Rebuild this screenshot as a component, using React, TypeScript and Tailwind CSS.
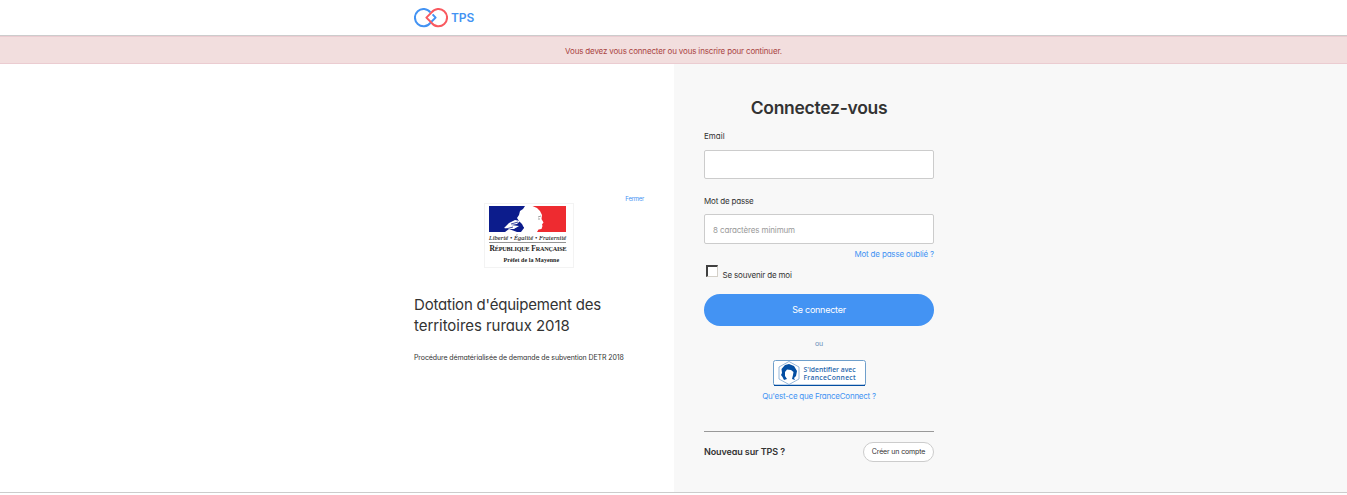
import React from 'react';

function Logo() {
  return (
    <svg width="34" height="20" viewBox="0 0 34 20" fill="none" strokeWidth="2" strokeLinejoin="round">
      <path d="M16.4 4.4A8.6 8.6 0 1 0 16.4 14.8L21.6 9.6L18.6 6.4" stroke="#4393f3" />
      <path d="M17.6 4.4A8.6 8.6 0 1 1 17.6 14.8L12.4 9.6Z" stroke="#f9595f" />
    </svg>
  );
}

function Emblem() {
  return (
    <svg width="90" height="65" viewBox="0 0 90 65" className="block">
      <rect x="0.5" y="0.5" width="89" height="64" fill="#fff" stroke="#f3f3f3" />
      <path d="M5 3H41L39 6L36 8L35 12L33 15L35 18L38 21L40 25L37 29H5Z" fill="#0c1c8c" />
      <path d="M48.5 3H82V29H53L54.5 26.5L57.5 26L58.5 23L58 21.5L59.5 19.5L57.5 16L58 12L56 8L53 5Z" fill="#ee2b30" />
      <path d="M20 25L25 20L31 17L36 18L33 21L27 22L35 23L30 26L25 26L33 29H21L25 26Z" fill="#fff" />
      <path d="M22 26L29 24M27 21L34 19M31 26L38 25M36 22L40 25" stroke="#0c1c8c" strokeWidth="0.8" />
      <path d="M54 14L57 13M54 16H56" stroke="#777" strokeWidth="0.7" />
      <g fontFamily="'Liberation Serif', serif" fill="#222">
        <text x="5" y="37.2" fontSize="6.4" fontStyle="italic" textLength="77" stroke="#222" strokeWidth="0.1">Liberté • Égalité • Fraternité</text>
        <path d="M5 39.5H82" stroke="#666" strokeWidth="0.7" />
        <text x="5.5" y="47.5" fontSize="7.2" fontWeight="bold" textLength="77" lengthAdjust="spacingAndGlyphs">R<tspan fontSize="5.9">ÉPUBLIQUE</tspan> F<tspan fontSize="5.9">RANÇAISE</tspan></text>
        <text x="19.5" y="59" fontSize="6" fontWeight="bold" textLength="55.5">Préfet de la Mayenne</text>
      </g>
    </svg>
  );
}

function FranceConnect() {
  return (
    <button type="button" className="block h-[26px] w-[93px]" aria-label="FranceConnect">
      <svg width="93" height="26" viewBox="0 0 93 26">
        <rect x="0.5" y="0.5" width="92" height="25" rx="2" fill="#fff" stroke="#6f9fcb" />
        <path d="M1 25.3H92" stroke="#034ea2" strokeWidth="1.2" />
        <path d="M16 1.5L26 7V19L16 24.5L6 19V7Z" fill="none" stroke="#7ba5d0" strokeWidth="0.8" />
        <path d="M11 20L9.5 17L8 15L9 13L8.5 9L12 5L16 4L21 6L24 11L23 16L21 18L22 20L19 19L20 15L20.5 12L18 10L14 9.5L12 12L12 16L14 19Z" fill="#034ea2" />
        <g fontFamily="'Open Sans', sans-serif" fontSize="6.8" fontWeight="600" fill="#2b68ad">
          <text x="30.5" y="12" textLength="52">S'identifier avec</text>
          <text x="30.5" y="19.7" textLength="52">FranceConnect</text>
        </g>
      </svg>
    </button>
  );
}

export default function App() {
  return (
    <div className="flex h-[495px] w-full flex-col overflow-hidden whitespace-nowrap bg-white font-['Inter',sans-serif] text-[8px] tracking-[-0.17px] text-[#333] [font-feature-settings:'cv11']">
      <header className="flex h-9 shrink-0 justify-center border-b border-[#ccc]">
        <div className="flex w-[519px] items-center gap-[3px]">
          <Logo />
          <span className="text-[12px] font-semibold leading-4 tracking-[-0.1px] text-[#4393f3]">TPS</span>
        </div>
      </header>
      <div className="flex h-7 shrink-0 items-center justify-center border-y border-[#ebccd1] bg-[#f2dede] pt-[2px] text-[#a94442]">
        Vous devez vous connecter ou vous inscrire pour continuer.
      </div>
      <main className="grid h-[429px] shrink-0 grid-cols-2 border-b border-[#ccc]">
        <section className="flex justify-end">
          <div className="flex w-[259.5px] flex-col pr-[29.5px] pt-[131px]">
            <a className="h-2 self-end text-[6px] leading-2 tracking-[-0.25px] text-[#4393f3]">Fermer</a>
            <div className="h-[65px] self-center">
              <Emblem />
            </div>
            <h1 className="mt-[26px] text-[15px] leading-[21px] tracking-[-0.2px]">
              Dotation d'équipement des<br />
              <span className="tracking-[-0.05px]">territoires ruraux 2018</span>
            </h1>
            <p className="mt-4 text-[7px] leading-3 tracking-[-0.1px]">Procédure dématérialisée de demande de subvention DETR 2018</p>
          </div>
        </section>
        <section className="bg-[#f8f8f8] pl-[30.5px]">
          <form className="flex w-[230px] flex-col pt-8">
            <h2 className="text-center text-[17.5px] font-semibold leading-6 tracking-[-0.27px]">Connectez-vous</h2>
            <label className="mt-[10px] leading-3 tracking-normal">Email</label>
            <input className="mt-2 h-[29px] rounded-[2px] border border-[#ccc] bg-white px-2" />
            <label className="mt-4 leading-3">Mot de passe</label>
            <input className="mt-[7px] h-[30px] rounded-[2px] border border-[#ccc] bg-white px-2 pt-[2px] tracking-[-0.13px] placeholder:text-[#999]" placeholder="8 caractères minimum" />
            <a className="mt-1 self-end leading-3 text-[#4393f3]">Mot de passe oublié ?</a>
            <div className="flex h-[17px] items-start pl-[2px] pt-[5px]">
              <span className="h-3 w-3 border-b border-l-2 border-r border-t-2 border-b-[#d4d0c8] border-l-[#404040] border-r-[#d4d0c8] border-t-[#404040] bg-white" />
              <span className="ml-[4.5px] mt-1 leading-3">Se souvenir de moi</span>
            </div>
            <button type="button" className="mt-[17px] h-8 rounded-full bg-[#4393f3] text-[9px] tracking-[-0.25px] text-white">Se connecter</button>
            <span className="mt-3 text-center text-[7px] leading-3 text-[#6b8fba]">ou</span>
            <div className="mt-[10px] flex justify-center">
              <FranceConnect />
            </div>
            <a className="mt-1 text-center leading-3 tracking-[-0.24px] text-[#4393f3]">Qu'est-ce que FranceConnect ?</a>
            <div className="mt-[29px] flex items-start justify-between border-t border-[#999] pt-[10px]">
              <span className="text-[9px] font-semibold leading-5 tracking-[-0.1px]">Nouveau sur TPS ?</span>
              <button type="button" className="h-5 w-[71px] rounded-full border border-[#ccc] bg-white pt-px text-[7px] tracking-[-0.15px]">Créer un compte</button>
            </div>
          </form>
        </section>
      </main>
    </div>
  );
}
